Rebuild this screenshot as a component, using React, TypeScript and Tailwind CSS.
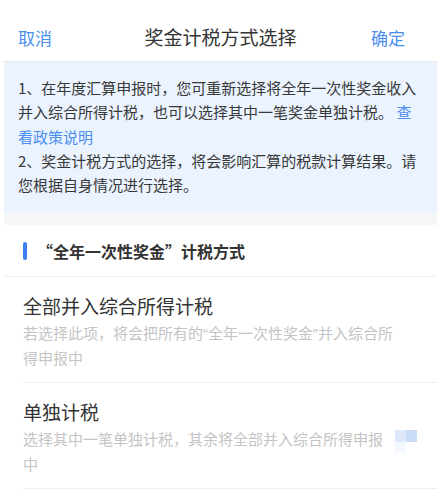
import React from 'react'

const cjk = { fontFamily: '"Noto Sans CJK SC", "Liberation Sans", sans-serif' }
const latinFirst = { fontFamily: '"Liberation Sans", "Noto Sans CJK SC", sans-serif' }

function Option({ title, lines, mark }: { title: string; lines: string[]; mark?: boolean }) {
  return (
    <div className="relative ml-[19px] border-b border-[#efefef] pt-[16px] pb-[11px]">
      <div className="text-[19px] leading-[26px] text-[#333]">{title}</div>
      <div className="mt-[2px] text-[15px] leading-[25px] text-[#c4c4c4]" style={latinFirst}>
        {lines.map((l) => (
          <div key={l} className="whitespace-nowrap">{l}</div>
        ))}
      </div>
      {mark && (
        // half-loaded check icon on the right
        <div className="absolute right-[20px] top-[47px] flex flex-col">
          <div className="flex">
            <div className="h-[12px] w-[11px] bg-[#dde8fb]" />
            <div className="h-[12px] w-[11px] bg-[#cadcf8]" />
          </div>
          <div className="h-[11px] w-[11px] bg-[#f3f7fe]" />
        </div>
      )}
    </div>
  )
}

export default function App() {
  return (
    <div className="h-[493px] w-[442px] overflow-hidden bg-white pl-[4px] pr-[5px]" style={cjk}>
      {/* header */}
      <div className="grid h-[62px] grid-cols-[1fr_auto_1fr] items-center border-b border-[#ebebeb] px-[14px] pt-[14px]">
        <span className="justify-self-start text-[17px] text-[#4a8ef0]">取消</span>
        <span className="text-[19px] text-[#333]">奖金计税方式选择</span>
        <span className="mr-[18px] justify-self-end text-[17px] text-[#4a8ef0]">确定</span>
      </div>

      {/* notice */}
      <div className="h-[150px] bg-[#eaf3fe] px-[14px] pt-[14px] text-[15px] leading-[24.25px] text-[#383838]">
        <div className="whitespace-nowrap">1、在年度汇算申报时，您可重新选择将全年一次性奖金收入</div>
        <div className="whitespace-nowrap">
          并入综合所得计税，也可以选择其中一笔奖金单独计税。 <span className="text-[#4a8ef0]">查</span>
        </div>
        <div className="whitespace-nowrap text-[#4a8ef0]">看政策说明</div>
        <div className="whitespace-nowrap">2、奖金计税方式的选择，将会影响汇算的税款计算结果。请</div>
        <div className="whitespace-nowrap">您根据自身情况进行选择。</div>
      </div>

      <div className="h-[13px] bg-[#f5f6f8]" />

      {/* section title */}
      <div className="flex h-[52px] items-center gap-[10px] border-b border-[#f0f0f0] pl-[19px] pt-[1px]">
        <div className="h-[18px] w-[4px] rounded-full bg-[#3b7ff5]" />
        <span className="text-[16px] font-bold text-[#333]">“全年一次性奖金”计税方式</span>
      </div>

      <Option title="全部并入综合所得计税" lines={['若选择此项，将会把所有的“全年一次性奖金”并入综合所', '得申报中']} />
      <Option title="单独计税" lines={['选择其中一笔单独计税，其余将全部并入综合所得申报', '中']} mark />
    </div>
  )
}
